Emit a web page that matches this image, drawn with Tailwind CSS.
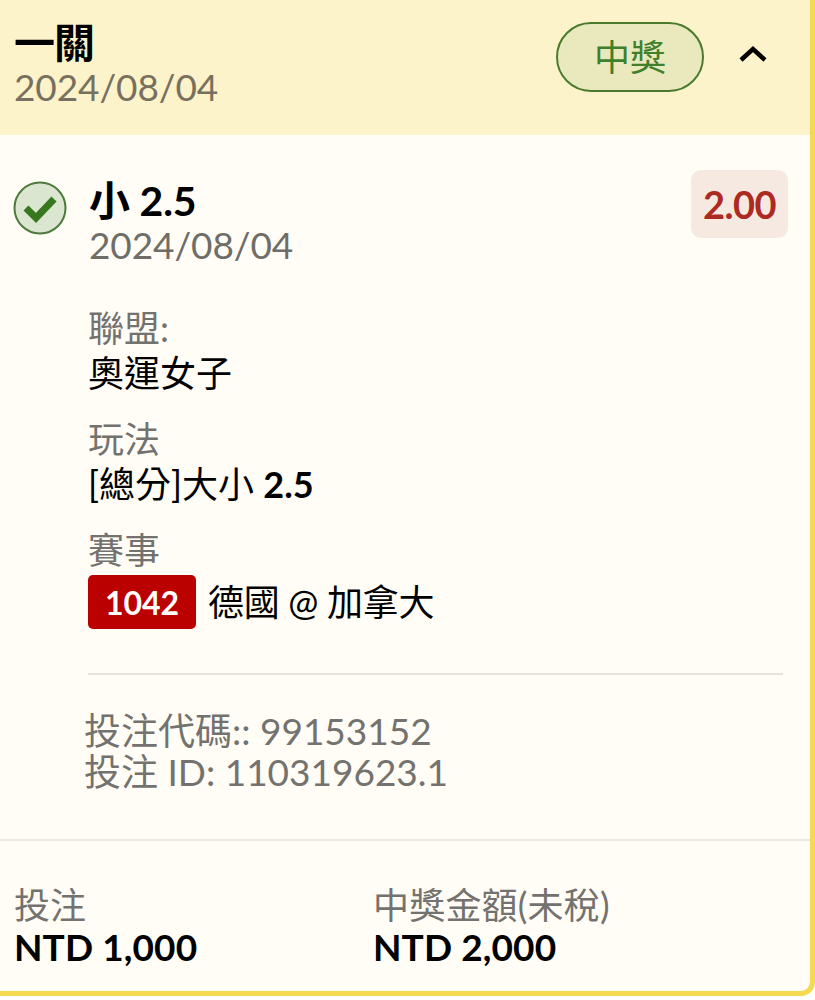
<!DOCTYPE html>
<html lang="zh-Hant">
<head>
    <meta charset="UTF-8">
    <meta name="viewport" content="width=device-width, initial-scale=1.0">
    <title>一關</title>
    <script src="https://cdn.jsdelivr.net/npm/@tailwindcss/browser@4"></script>
</head>
<body class="bg-white">
    <div class="w-[815px] h-[1000px] overflow-hidden font-['Lato','Noto_Sans_CJK_TC',sans-serif] text-[36px] leading-[41px]">
        <div class="h-[996px] border-r-[5px] border-b-[5px] border-[#f5d94e] rounded-br-[14px] bg-[#fffdf5] flex flex-col overflow-hidden">
            <!-- header -->
            <header class="h-[135px] shrink-0 bg-[#fdf3cb] flex items-start justify-between pl-[14px] pr-[42px] pt-[22px]">
                <div>
                    <h1 class="font-bold text-black text-[41px] leading-[42px] tracking-[-1px]">一關</h1>
                    <p class="text-[#78705e] text-[37px] leading-[45px] tracking-[-0.1px]">2024/08/04</p>
                </div>
                <div class="flex items-center gap-[34px]">
                    <span class="w-[148px] h-[70px] rounded-full border-2 border-[#4a7a2c] bg-[#e9e9bd] text-[#41802a] text-[36px] flex items-center justify-center">中獎</span>
                    <svg class="w-[30px] h-[20px] -mt-[8px]" viewBox="0 0 30 20" fill="none" stroke="#000" stroke-width="4.5"><path d="M3 17 L15 6 L27 17"/></svg>
                </div>
            </header>

            <!-- selection -->
            <section class="pl-[13px] pr-[22px] pt-[35px] flex-1">
                <div class="flex items-start justify-between">
                    <div class="flex gap-[22px]">
                        <svg class="w-[54px] h-[54px] mt-[11px] shrink-0" viewBox="0 0 54 54">
                            <circle cx="27" cy="27" r="25.5" fill="#dbe6d0" stroke="#4d7a3c" stroke-width="2"/>
                            <path d="M13 27 L23 37 L41 18" fill="none" stroke="#37781f" stroke-width="7"/>
                        </svg>
                        <div>
                            <h2 class="font-bold text-black text-[41px] leading-[44px] mt-[9px] tracking-[-0.2px]">小 2.5</h2>
                            <p class="text-[#6f6d68] text-[37px] leading-[44px] tracking-[-0.1px]">2024/08/04</p>
                        </div>
                    </div>
                    <span class="w-[97px] h-[68px] rounded-[10px] bg-[#f6e9e2] text-[#ad2a22] text-[38px] font-bold tracking-[-0.5px] flex items-center justify-center">2.00</span>
                </div>

                <dl class="ml-[75px] mt-[38px]">
                    <dt class="text-[#74726e] leading-[46px]">聯盟:</dt>
                    <dd class="text-black leading-[44px]">奧運女子</dd>
                    <dt class="text-[#74726e] leading-[46px] mt-[21px]">玩法</dt>
                    <dd class="text-black leading-[44px]">[總分]大小 <b>2.5</b></dd>
                    <dt class="text-[#74726e] leading-[46px] mt-[21px]">賽事</dt>
                    <dd class="text-black flex items-center gap-[12px] mt-[2px]">
                        <span class="w-[108px] h-[54px] rounded-[5px] bg-[#bb0000] text-white text-[32px] font-bold flex items-center justify-center">1042</span>
                        <span class="tracking-[-0.3px]">德國 @ 加拿大</span>
                    </dd>
                </dl>

                <div class="ml-[75px] mr-[5px] mt-[44px] border-t-2 border-[#e6e3dc]"></div>

                <div class="ml-[71px] mt-[35px] text-[#74726e] text-[37px] leading-[41px]">
                    <p>投注代碼:: 99153152</p>
                    <p>投注 ID: 110319623.1</p>
                </div>
            </section>

            <!-- totals -->
            <footer class="h-[152px] shrink-0 border-t-2 border-[#e9e7df] flex pl-[14px] pt-[44px]">
                <div class="w-[359px]">
                    <p class="text-[#74726e] text-[36px] leading-[41px]">投注</p>
                    <p class="font-bold text-black text-[37px] leading-[41px] tracking-[0.1px]">NTD 1,000</p>
                </div>
                <div>
                    <p class="text-[#74726e] text-[36px] leading-[41px] tracking-[0.2px]">中獎金額(未稅)</p>
                    <p class="font-bold text-black text-[37px] leading-[41px] tracking-[0.1px]">NTD 2,000</p>
                </div>
            </footer>
        </div>
    </div>
</body>
</html>
